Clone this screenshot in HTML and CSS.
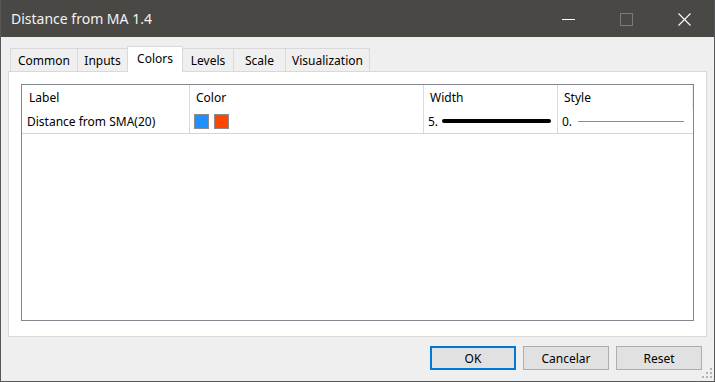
FILE: index.html
```html
<!DOCTYPE html>
<html lang="en">
<head>
    <meta charset="UTF-8">
    <title>Distance from MA 1.4</title>
    <link rel="stylesheet" href="styles.css">
</head>
<body>
    <div class="janela">
        <div class="titulo">
            <span class="titulo-texto">Distance from MA 1.4</span>
            <div class="controles">
                <svg class="ctrl" width="13" height="13" viewBox="0 0 13 13"><line x1="0" y1="6.5" x2="13" y2="6.5" stroke="#ffffff" stroke-width="1"/></svg>
                <svg class="ctrl" width="13" height="13" viewBox="0 0 13 13"><rect x="0.5" y="0.5" width="12" height="12" fill="none" stroke="#7d7b78" stroke-width="1"/></svg>
                <svg class="ctrl" width="13" height="13" viewBox="0 0 13 13"><path d="M0.5 0.5 L12.5 12.5 M12.5 0.5 L0.5 12.5" stroke="#ffffff" stroke-width="1.1"/></svg>
            </div>
        </div>
        <div class="corpo">
            <div class="abas">
                <div class="aba a-common">Common</div>
                <div class="aba a-inputs">Inputs</div>
                <div class="aba ativa">Colors</div>
                <div class="aba a-levels">Levels</div>
                <div class="aba a-scale">Scale</div>
                <div class="aba a-vis">Visualization</div>
            </div>
            <div class="painel">
                <div class="lista">
                    <div class="linha cabecalho">
                        <div class="col c1">Label</div>
                        <div class="col c2">Color</div>
                        <div class="col c3">Width</div>
                        <div class="col c4">Style</div>
                    </div>
                    <div class="linha dados">
                        <div class="col c1">Distance from SMA(20)</div>
                        <div class="col c2">
                            <span class="cor azul"></span>
                            <span class="cor laranja"></span>
                        </div>
                        <div class="col c3">5. <span class="traco grosso"></span></div>
                        <div class="col c4">0. <span class="traco fino"></span></div>
                    </div>
                </div>
            </div>
            <div class="botoes">
                <button class="botao padrao">OK</button>
                <button class="botao">Cancelar</button>
                <button class="botao">Reset</button>
            </div>
            <svg class="grip" width="10" height="10" viewBox="0 0 10 10">
                <rect x="8" y="0" width="2" height="2" fill="#b4b4b4"/>
                <rect x="4" y="4" width="2" height="2" fill="#b4b4b4"/>
                <rect x="8" y="4" width="2" height="2" fill="#b4b4b4"/>
                <rect x="0" y="8" width="2" height="2" fill="#b4b4b4"/>
                <rect x="4" y="8" width="2" height="2" fill="#b4b4b4"/>
                <rect x="8" y="8" width="2" height="2" fill="#b4b4b4"/>
            </svg>
        </div>
    </div>
</body>
</html>
```
FILE: styles.css
```css
*{
    margin: 0;
    padding: 0;
    box-sizing: border-box;
}
body{
    background-color: #efefef;
    font-family: "Noto Sans", "Liberation Sans", sans-serif;
    font-size: 12px;
    color: #000;
}
.janela{
    width: 715px;
    height: 382px;
    border: 1px solid #575757;
    border-top: none;
    background-color: #efefef;
    display: flex;
    flex-direction: column;
}
.titulo{
    height: 37px;
    background-color: #4a4845;
    display: flex;
    align-items: center;
    justify-content: space-between;
    color: #f2f2f2;
    padding-left: 10px;
}
.titulo-texto{
    font-size: 14px;
    margin-top: -1px;
}
.controles{
    display: flex;
    gap: 45px;
    margin-right: 23px;
    margin-top: 1px;
}
.ctrl{
    display: block;
}
.corpo{
    position: relative;
    flex: 1;
    padding: 9px 7px 0 7px;
}
.abas{
    display: flex;
    align-items: flex-end;
    margin-left: 2px;
    height: 25px;
}
.aba{
    height: 23px;
    line-height: 23px;
    border: 1px solid #d9d9d9;
    border-bottom: none;
    margin-right: -1px;
    text-align: center;
    background-color: #efefef;
}
.a-common{ width: 68px; }
.a-inputs{ width: 51px; }
.a-levels{ width: 52px; }
.a-scale{ width: 53px; }
.a-vis{ width: 85px; }
.aba.ativa{
    width: 56px;
    height: 26px;
    line-height: 23px;
    background-color: #fff;
    position: relative;
    z-index: 1;
    margin-bottom: -1px;
}
.painel{
    height: 266px;
    background-color: #fff;
    border: 1px solid #d9d9d9;
    padding: 12px 12px 0 12px;
}
.lista{
    height: 237px;
    border: 1px solid #828790;
}
.linha{
    display: flex;
}
.cabecalho{
    height: 24px;
}
.dados{
    height: 25px;
    border-bottom: 1px solid #d5d5d5;
}
.col{
    display: flex;
    align-items: center;
    border-right: 1px solid #dadada;
    white-space: nowrap;
}
.cabecalho .col{
    padding-left: 6px;
}
.cabecalho .c1{
    padding-left: 7px;
}
.dados .col{
    padding-left: 4px;
}
.dados .c1{
    padding-left: 5px;
}
.c1{ width: 168px; }
.c2{ width: 234px; }
.c3{ width: 134px; }
.c4{ width: 135px; }
.cabecalho .c4{
    border-right-color: #ececec;
}
.dados .c4{
    border-right: none;
}
.cor{
    width: 15px;
    height: 15px;
    border: 1px solid #8c8c8c;
    margin-right: 5px;
}
.azul{ background-color: #1e90ff; }
.laranja{ background-color: #ff4500; }
.traco{
    display: inline-block;
    margin-left: 4px;
}
.grosso{
    width: 109px;
    height: 4px;
    background-color: #000;
    border-radius: 2px;
}
.fino{
    width: 106px;
    height: 1px;
    background-color: #8c8c8c;
    margin-left: 6px;
}
.botoes{
    display: flex;
    justify-content: flex-end;
    gap: 7px;
    margin-top: 9px;
    padding-right: 5px;
}
.botao{
    width: 86px;
    height: 24px;
    font-family: "Noto Sans", "Liberation Sans", sans-serif;
    font-size: 12px;
    background-color: #e1e1e1;
    border: 1px solid #adadad;
    color: #000;
}
.botao.padrao{
    border: 2px solid #0078d7;
}
.grip{
    position: absolute;
    right: 2px;
    bottom: 3px;
}
```
